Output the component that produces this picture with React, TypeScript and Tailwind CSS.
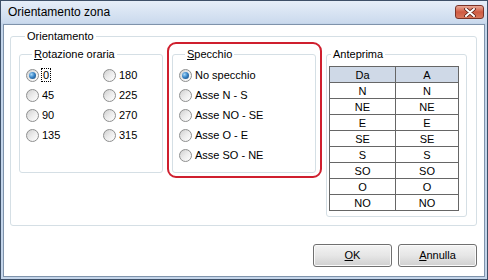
import React from "react";

function Radio({ checked }: { checked?: boolean }) {
  return (
    <span className="w-[13px] h-[13px] shrink-0 rounded-full border border-[#8e8f8f] bg-gradient-to-br from-[#d0d0d0] via-[#ececec] to-[#ffffff] flex items-center justify-center">
      {checked && (
        <span className="w-[7px] h-[7px] rounded-full bg-[radial-gradient(circle_at_35%_35%,#a8d8f8_0%,#3a86c8_45%,#163f6e_100%)]" />
      )}
    </span>
  );
}

function RadioItem({ label, checked, focus }: { label: React.ReactNode; checked?: boolean; focus?: boolean }) {
  return (
    <div className="flex items-center h-[20px] gap-[2px]">
      <Radio checked={checked} />
      {focus ? (
        <span className="border border-dotted border-black px-[1px] leading-[12px]">{label}</span>
      ) : (
        <span className="pl-[1px]">{label}</span>
      )}
    </div>
  );
}

const rows = ["N", "NE", "E", "SE", "S", "SO", "O", "NO"];

export default function App() {
  return (
    <div className="w-[488px] h-[280px] bg-[#c4d5ea] border border-[#3e5068] flex flex-col font-['Liberation_Sans',Arial,sans-serif] text-[11px] text-black leading-[13px] overflow-hidden">
      {/* Title bar */}
      <div className="h-[22px] shrink-0 flex items-center justify-between pl-[7px] pr-[3px] bg-gradient-to-b from-[#e6eef8] to-[#cbdaed]">
        <span className="text-[12px] leading-[14px] text-black">Orientamento zona</span>
        <div className="w-[29px] h-[14px] rounded-[3px] border border-[#7a3328] bg-gradient-to-b from-[#e8a996] via-[#cf5a42] to-[#d8775c] flex items-center justify-center">
          <svg width="12" height="9" viewBox="0 0 12 9">
            <path d="M2 1 L10 8 M10 1 L2 8" stroke="#5a1e14" strokeWidth="3.6" strokeLinecap="round" />
            <path d="M2 1 L10 8 M10 1 L2 8" stroke="#ffffff" strokeWidth="2" strokeLinecap="round" />
          </svg>
        </div>
      </div>

      {/* Client */}
      <div className="flex-1 mx-[2px] mb-[2px] mt-[1px] bg-white border border-[#7f93ab] flex flex-col pt-[5px] pl-[6px] pr-[7px]">
        <fieldset className="h-[196px] border border-[#d5dfe5] rounded-[3px] p-0 m-0 pt-[5px] pl-[8px]">
          <legend className="ml-[6px] px-[2px] leading-[13px]">Orientamento</legend>
          <div className="flex items-start">
            {/* Rotazione oraria */}
            <fieldset className="w-[144px] h-[125px] border border-[#d5dfe5] rounded-[3px] p-0 m-0 pt-[4px] pl-[6px]">
              <legend className="ml-[6px] px-[2px] leading-[13px]">
                <span className="underline">R</span>otazione oraria
              </legend>
              <div className="grid grid-cols-[77px_1fr]">
                <RadioItem label="0" checked focus />
                <RadioItem label="180" />
                <RadioItem label="45" />
                <RadioItem label="225" />
                <RadioItem label="90" />
                <RadioItem label="270" />
                <RadioItem label="135" />
                <RadioItem label="315" />
              </div>
            </fieldset>

            {/* Specchio */}
            <div className="relative ml-[9px]">
              <fieldset className="w-[144px] h-[125px] border border-[#d5dfe5] rounded-[3px] p-0 m-0 pt-[4px] pl-[6px]">
                <legend className="ml-[6px] px-[2px] leading-[13px]">
                  <span className="underline">S</span>pecchio
                </legend>
                <div className="flex flex-col">
                  <RadioItem label="No specchio" checked />
                  <RadioItem label="Asse N - S" />
                  <RadioItem label="Asse NO - SE" />
                  <RadioItem label="Asse O - E" />
                  <RadioItem label="Asse SO - NE" />
                </div>
              </fieldset>
              <div className="absolute -left-[5px] -right-[6px] -top-[6px] -bottom-[5px] border-2 border-[#cf1f2e] rounded-[9px] pointer-events-none" />
            </div>

            {/* Anteprima */}
            <fieldset className="ml-[10px] w-[141px] h-[169px] border border-[#d5dfe5] rounded-[3px] p-0 m-0 pt-[5px] pl-[2px]">
              <legend className="ml-[2px] px-[2px] leading-[13px]">Anteprima</legend>
              <table className="w-[130px] border-collapse border border-[#555555] text-center">
                <thead>
                  <tr className="h-[16px] bg-[#cfd9e7]">
                    <th className="w-[66px] border border-[#666666] font-normal p-0 leading-[14px]">Da</th>
                    <th className="border border-[#666666] font-normal p-0 leading-[14px]">A</th>
                  </tr>
                </thead>
                <tbody>
                  {rows.map((r) => (
                    <tr key={r} className="h-[16px]">
                      <td className="border border-[#666666] p-0 leading-[14px]">{r}</td>
                      <td className="border border-[#666666] p-0 leading-[14px]">{r}</td>
                    </tr>
                  ))}
                </tbody>
              </table>
            </fieldset>
          </div>
        </fieldset>

        {/* Buttons */}
        <div className="flex justify-end gap-[6px] mt-[18px]">
          <button className="w-[79px] h-[23px] rounded-[3px] border border-[#707070] bg-gradient-to-b from-[#f3f3f3] via-[#e6e6e6] to-[#d0d0d0] shadow-[inset_0_0_0_1px_#fbfbfb] text-[11px]">
            <span className="underline">O</span>K
          </button>
          <button className="w-[79px] h-[23px] rounded-[3px] border border-[#707070] bg-gradient-to-b from-[#f3f3f3] via-[#e6e6e6] to-[#d0d0d0] shadow-[inset_0_0_0_1px_#fbfbfb] text-[11px]">
            <span className="underline">A</span>nnulla
          </button>
        </div>
      </div>
    </div>
  );
}
